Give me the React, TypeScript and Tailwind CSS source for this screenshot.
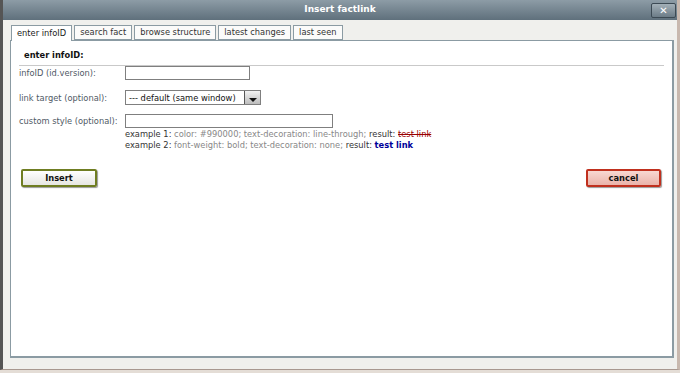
import React from "react";

const tabs = ["enter infoID", "search fact", "browse structure", "latest changes", "last seen"];

export default function App() {
  return (
    <div
      className="w-[680px] h-[373px] bg-[#e4ddd6] text-[8.3px] text-[#333]"
      style={{ fontFamily: '"DejaVu Sans", Verdana, sans-serif' }}
    >
      <div className="flex h-[370px] flex-col border-l-[3px] border-r-[3px] border-b border-l-[#555] border-r-[#c8b8ae] border-b-[#a89890] bg-[#f0f0ed]">
        {/* title bar */}
        <div className="relative flex h-[20px] items-center justify-center bg-gradient-to-b from-[#8d9ca6] to-[#5f707c] text-[9px] font-bold text-white">
          Insert factlink
          <span className="absolute right-[1px] top-[3px] flex h-[15px] w-[25px] items-center justify-center rounded-[2px] border border-[#3c4a54] bg-gradient-to-b from-[#a3b0b8] to-[#6c7c87] text-[10px] font-bold leading-none text-white">
            ✕
          </span>
        </div>

        {/* tabs */}
        <div className="mt-[5px] flex gap-[2px] pl-[8px]">
          {tabs.map((t, i) => (
            <div
              key={t}
              className={
                i === 0
                  ? "relative z-10 -mb-px flex h-[16px] items-center border border-b-0 border-[#8b9ba3] bg-white px-[5px] text-[#222]"
                  : "flex h-[15px] items-center border border-[#8b9ba3] bg-[#fbfbfa] px-[5px] text-[#333]"
              }
            >
              {t}
            </div>
          ))}
        </div>

        {/* panel */}
        <div className="ml-[7px] mr-[3px] flex-1 border border-[#8b9ba3] border-b-2 border-r-2 bg-white px-[8px] pt-[8px]">
          <div className="border-b border-[#c9c9c9] pb-[4px] pl-[5px] font-bold text-[#111]">enter infoID:</div>

          <div className="flex items-start">
            <div className="w-[106px] pt-[1px] text-[#505a66]">infoID (id.version):</div>
            <div className="h-[14px] w-[125px] border border-[#7f7f7f] bg-white" />
          </div>

          <div className="mt-[10px] flex items-start">
            <div className="w-[106px] pt-[2px] text-[#505a66]">link target (optional):</div>
            <div className="flex h-[15px] items-stretch border border-[#7f7f7f] bg-white">
              <div className="flex w-[118px] items-center pl-[3px] text-[#111]">--- default (same window)</div>
              <div className="flex w-[16px] items-end justify-center border-l border-[#555] bg-gradient-to-b from-[#f2f2f2] to-[#bdbdbd] pb-[2px]">
                <span className="h-0 w-0 border-l-[4px] border-r-[4px] border-t-[4px] border-l-transparent border-r-transparent border-t-[#111]" />
              </div>
            </div>
          </div>

          <div className="mt-[9px] flex items-start">
            <div className="w-[106px] pt-[1px] text-[#505a66]">custom style (optional):</div>
            <div>
              <div className="h-[14px] w-[208px] border border-[#7f7f7f] bg-white" />
              <div className="mt-[1px] leading-[10.5px] text-[#888]">
                <span className="text-[#333]">example 1:</span> color: #990000; text-decoration: line-through;{" "}
                <span className="text-[#333]">result:</span>{" "}
                <span className="text-[#990000] line-through">test link</span>
              </div>
              <div className="leading-[10.5px] text-[#888]">
                <span className="text-[#333]">example 2:</span> font-weight: bold; text-decoration: none;{" "}
                <span className="text-[#333]">result:</span>{" "}
                <span className="font-bold text-[#000099]">test link</span>
              </div>
            </div>
          </div>

          <div className="mt-[19px] flex justify-between pl-[2px] pr-[3px]">
            <button className="h-[18px] w-[76px] rounded-[2px] border-2 border-[#6f7d22] bg-gradient-to-b from-[#ffffff] to-[#e6e6e2] text-[8.3px] font-bold text-[#111] shadow-[1px_1px_1px_#999]">
              Insert
            </button>
            <button className="h-[18px] w-[75px] rounded-[2px] border-2 border-[#c0301e] bg-gradient-to-b from-[#f8d8d2] to-[#eab3aa] text-[8.3px] font-bold text-[#111] shadow-[1px_1px_1px_#999]">
              cancel
            </button>
          </div>
        </div>
        <div className="h-[11px]" />
      </div>
    </div>
  );
}
